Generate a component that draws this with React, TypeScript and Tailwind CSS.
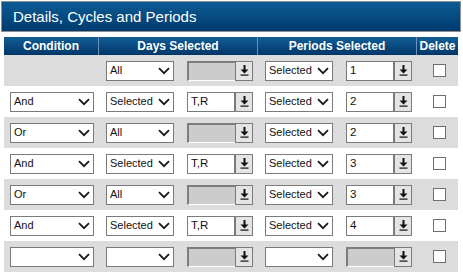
type Row = {
  cond: string | null
  days: string
  dayList: string | null
  periods: string
  period: string | null
}

const ROWS: Row[] = [
  { cond: null, days: 'All', dayList: null, periods: 'Selected', period: '1' },
  { cond: 'And', days: 'Selected', dayList: 'T,R', periods: 'Selected', period: '2' },
  { cond: 'Or', days: 'All', dayList: null, periods: 'Selected', period: '2' },
  { cond: 'And', days: 'Selected', dayList: 'T,R', periods: 'Selected', period: '3' },
  { cond: 'Or', days: 'All', dayList: null, periods: 'Selected', period: '3' },
  { cond: 'And', days: 'Selected', dayList: 'T,R', periods: 'Selected', period: '4' },
  { cond: '', days: '', dayList: null, periods: '', period: null },
]

function Chevron() {
  return (
    <svg width="12" height="8" viewBox="0 0 12 8">
      <polyline points="1,1.2 6,6.2 11,1.2" fill="none" stroke="#1a1a1a" strokeWidth="1.8" />
    </svg>
  )
}

function Select({ value, width }: { value: string; width: string }) {
  return (
    <div
      className={`${width} h-[20px] flex items-center justify-between bg-white border border-[#7a7a7a] pl-[3px] pr-[3px] text-[11px] text-[#111]`}
    >
      <span className="leading-none">{value}</span>
      <Chevron />
    </div>
  )
}

function DownIcon() {
  return (
    <svg width="9" height="11" viewBox="0 0 9 11">
      <rect x="3.5" y="0" width="2" height="5" fill="#111" />
      <polygon points="0.5,4.5 8.5,4.5 4.5,8.5" fill="#111" />
      <rect x="0.5" y="9.5" width="8" height="1.2" fill="#111" />
    </svg>
  )
}

function PickBox({ value }: { value: string | null }) {
  const disabled = value === null
  return (
    <div className="flex h-[20px]">
      {disabled ? (
        <div className="w-[48px] h-[20px] bg-[#cccccc] border-t-2 border-l-2 border-[#7d7d7d] border-b border-b-white" />
      ) : (
        <div className="w-[48px] h-[20px] bg-white border border-[#7a7a7a] pl-[3px] flex items-center text-[11.5px] leading-none text-[#111]">
          {value}
        </div>
      )}
      <div className="w-[18px] h-[20px] bg-[#e4e4e4] border border-[#7a7a7a] flex items-center justify-center">
        <DownIcon />
      </div>
    </div>
  )
}

export default function App() {
  return (
    <div className="w-[463px] h-[276px] bg-white pt-[1px] pl-[1px] font-['Liberation_Sans',Arial,sans-serif]">
      <div className="w-[460px] h-[31px] border border-[#8e8e8e] bg-[linear-gradient(#0b5b94,#003b6e)] flex items-center pl-[11px]">
        <span className="text-white text-[15px] leading-none">Details, Cycles and Periods</span>
      </div>

      <div className="ml-[3px] mt-[5px] w-[454px]">
        <div className="flex h-[18px] bg-[linear-gradient(#115e97,#003668)] text-white font-bold text-[12px] leading-none">
          <div className="w-[95px] flex items-center justify-center border-r border-[#6d8fb4]">Condition</div>
          <div className="w-[159px] flex items-center justify-center border-r border-[#6d8fb4]">Days Selected</div>
          <div className="w-[159px] flex items-center justify-center border-r border-[#6d8fb4]">Periods Selected</div>
          <div className="flex-1 flex items-center justify-center">Delete</div>
        </div>

        {ROWS.map((r, i) => (
          <div key={i} className={`flex items-center h-[31px] ${i % 2 === 0 ? 'bg-[#dcdcdc]' : 'bg-white'}`}>
            <div className="w-[95px] pl-[6px]">
              {r.cond !== null && <Select value={r.cond} width="w-[84px]" />}
            </div>
            <div className="w-[159px] pl-[7px] flex items-center gap-[13px]">
              <Select value={r.days} width="w-[68px]" />
              <PickBox value={r.dayList} />
            </div>
            <div className="w-[159px] pl-[7px] flex items-center gap-[13px]">
              <Select value={r.periods} width="w-[68px]" />
              <PickBox value={r.period} />
            </div>
            <div className="flex-1 flex justify-center pl-[3px]">
              <div className="w-[13px] h-[13px] bg-white border border-[#707070]" />
            </div>
          </div>
        ))}
      </div>
    </div>
  )
}
